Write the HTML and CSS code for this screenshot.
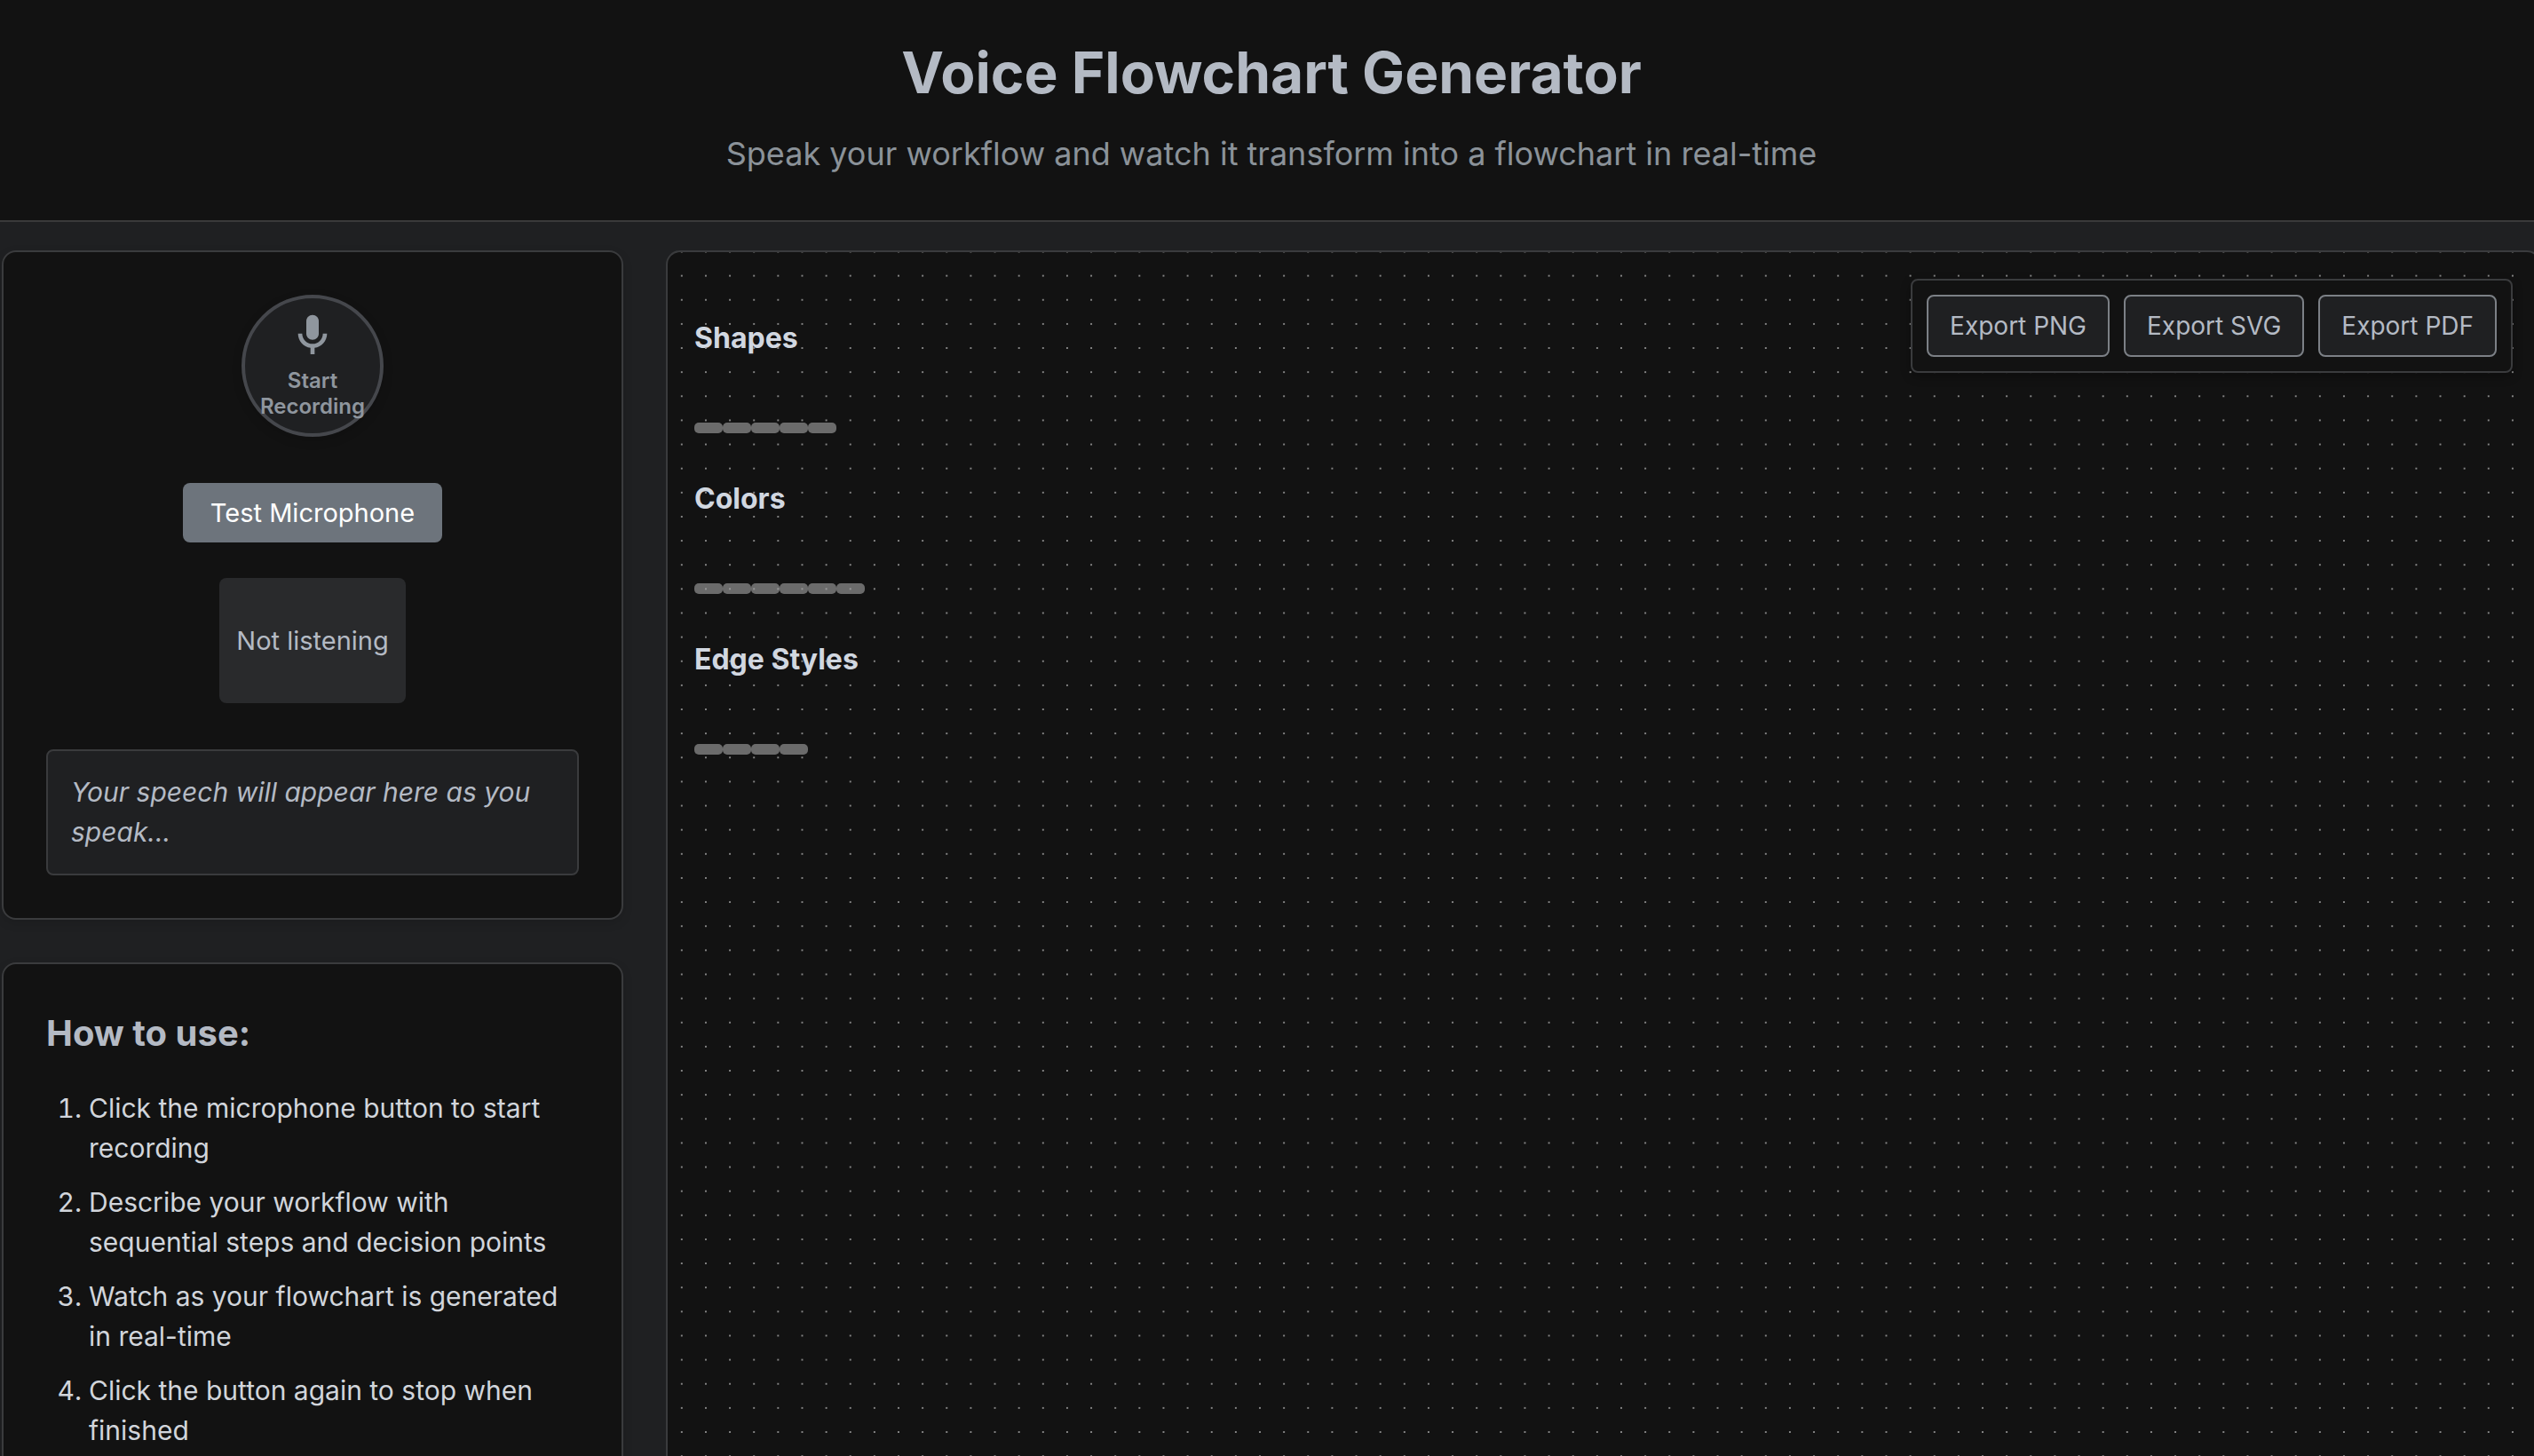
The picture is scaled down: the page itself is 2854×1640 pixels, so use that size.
FILE: index.html
```html
<!DOCTYPE html>
<html lang="en">
<head>
<meta charset="utf-8">
<title>Voice Flowchart Generator</title>
<link rel="stylesheet" href="styles.css">
</head>
<body>
<header class="header">
  <h1 class="title">Voice Flowchart Generator</h1>
  <p class="subtitle">Speak your workflow and watch it transform into a flowchart in real-time</p>
</header>
<main class="main">
  <aside class="sidebar">
    <section class="card recorder">
      <button class="record" type="button">
        <svg class="mic" viewBox="0 0 24 24" aria-hidden="true"><path d="M12 14c1.66 0 3-1.34 3-3V5c0-1.66-1.34-3-3-3S9 3.34 9 5v6c0 1.66 1.34 3 3 3z"/><path d="M17 11c0 2.76-2.24 5-5 5s-5-2.24-5-5H5c0 3.53 2.61 6.43 6 6.92V21h2v-3.08c3.39-.49 6-3.39 6-6.92h-2z"/></svg>
        <span>Start Recording</span>
      </button>
      <button class="test" type="button">Test Microphone</button>
      <div class="status">Not listening</div>
      <p class="transcript">Your speech will appear here as you speak...</p>
    </section>
    <section class="card guide">
      <h2 class="guide-title">How to use:</h2>
      <ol class="steps">
        <li>Click the microphone button to start recording</li>
        <li>Describe your workflow with sequential steps and decision points</li>
        <li>Watch as your flowchart is generated in real-time</li>
        <li>Click the button again to stop when finished</li>
      </ol>
    </section>
  </aside>
  <section class="canvas" aria-label="Flowchart">
    <div class="palette">
      <div class="group">
        <h4 class="group-title">Shapes</h4>
        <div class="swatches"><button class="swatch" type="button" aria-label="Rectangle"></button><button class="swatch" type="button" aria-label="Rounded"></button><button class="swatch" type="button" aria-label="Diamond"></button><button class="swatch" type="button" aria-label="Circle"></button><button class="swatch" type="button" aria-label="Hexagon"></button></div>
      </div>
      <div class="group">
        <h4 class="group-title">Colors</h4>
        <div class="swatches"><button class="swatch" type="button" aria-label="Blue"></button><button class="swatch" type="button" aria-label="Green"></button><button class="swatch" type="button" aria-label="Red"></button><button class="swatch" type="button" aria-label="Yellow"></button><button class="swatch" type="button" aria-label="Purple"></button><button class="swatch" type="button" aria-label="Gray"></button></div>
      </div>
      <div class="group">
        <h4 class="group-title">Edge Styles</h4>
        <div class="swatches"><button class="swatch" type="button" aria-label="Straight"></button><button class="swatch" type="button" aria-label="Step"></button><button class="swatch" type="button" aria-label="Smooth"></button><button class="swatch" type="button" aria-label="Animated"></button></div>
      </div>
    </div>
    <svg class="dots" aria-hidden="true">
      <defs><pattern id="dot-grid" x="2.25" y="13.05" width="27.133" height="27.133" patternUnits="userSpaceOnUse"><circle cx="13.567" cy="13.567" r="1" fill="#a8a8a8"/></pattern></defs>
      <rect width="100%" height="100%" fill="url(#dot-grid)"/>
    </svg>
    <div class="exports">
      <button class="export" type="button">Export PNG</button>
      <button class="export" type="button">Export SVG</button>
      <button class="export" type="button">Export PDF</button>
    </div>
  </section>
</main>
</body>
</html>
```
FILE: styles.css
```css
* { box-sizing: border-box; }
body {
  margin: 0;
  height: 100vh;
  display: flex;
  flex-direction: column;
  overflow: hidden;
  background: #1f2022;
  color: #d1d5db;
  font: 30px/45px Inter, sans-serif;
}
h1, h2, h4, p, ol { margin: 0; }
button { font-family: inherit; cursor: pointer; }

.header {
  flex: none;
  margin-right: -10px;
  padding: 42px 32px 48px;
  background: #121212;
  border-bottom: 2px solid #3a3a3a;
  text-align: center;
}
.title { font-size: 64px; line-height: 80px; font-weight: 700; color: #b4bac4; }
.subtitle { margin-top: 24px; font-size: 36px; line-height: 54px; color: #8b9299; }

.main {
  flex: 1;
  min-height: 0;
  margin-right: -10px;
  display: flex;
  gap: 48px;
  padding: 32px 2px 0;
}
.sidebar { flex: none; width: 700px; display: flex; flex-direction: column; gap: 48px; }
.card {
  flex: none;
  padding: 48px;
  background: #121212;
  border: 2px solid #3a3b3d;
  border-radius: 16px;
  box-shadow: 0 4px 12px rgba(0, 0, 0, 0.12);
}
.recorder { display: flex; flex-direction: column; align-items: center; }
.record {
  width: 160px;
  height: 160px;
  padding: 0 0 2px;
  display: flex;
  flex-direction: column;
  align-items: center;
  justify-content: center;
  gap: 8px;
  border: 4px solid #45474c;
  border-radius: 50%;
  background: #1f2022;
  color: #8f969e;
  font-size: 24px;
  line-height: 29px;
  font-weight: 600;
  box-shadow: 0 4px 12px rgba(0, 0, 0, 0.15);
}
.mic { width: 56px; height: 56px; fill: currentColor; }
.test {
  margin-top: 52px;
  padding: 16px 31px;
  border: 0;
  border-radius: 8px;
  background: #6d747c;
  color: #fff;
  font-size: 29px;
  line-height: 35px;
}
.status {
  margin-top: 40px;
  padding: 48px 19px;
  border-radius: 8px;
  background: #292a2c;
  color: #b4bac4;
  font-size: 29px;
}
.transcript {
  width: 100%;
  margin-top: 52px;
  padding: 24px 26px;
  border: 2px solid #3a3b3d;
  border-radius: 8px;
  background: #1f2022;
  color: #b4bac4;
  font-style: italic;
}
.guide-title { font-size: 40px; line-height: 60px; font-weight: 700; color: #b4bac4; }
.steps {
  margin-top: 32px;
  padding-left: 48px;
  display: flex;
  flex-direction: column;
  gap: 16px;
}

.canvas {
  position: relative;
  flex: 1;
  min-width: 0;
  padding: 73px 30px;
  overflow: hidden;
  background: #121212;
  border: 2px solid #3a3b3d;
  border-bottom: 0;
  border-radius: 16px 16px 0 0;
}
.palette { display: flex; flex-direction: column; gap: 50px; }
.group { display: flex; flex-direction: column; gap: 71px; }
.group-title { font-size: 32px; line-height: 48px; font-weight: 700; color: #d1d7e0; }
.swatches { display: flex; }
.swatch { width: 32px; height: 12px; padding: 0; border: 0; border-radius: 5px; background: #6b6b6b; }
.dots { position: absolute; inset: 0; width: 100%; height: 100%; pointer-events: none; }
.exports {
  position: absolute;
  top: 30px;
  right: 30px;
  display: flex;
  gap: 16px;
  padding: 16px;
  background: #121212;
  border: 2px solid #3a3b3d;
  border-radius: 8px;
  box-shadow: 0 4px 12px rgba(0, 0, 0, 0.3);
}
.export {
  padding: 16px 24px;
  border: 2px solid #7c8086;
  border-radius: 8px;
  background: #1f2022;
  color: #b4bac4;
  font-size: 28px;
  line-height: 34px;
}
```
